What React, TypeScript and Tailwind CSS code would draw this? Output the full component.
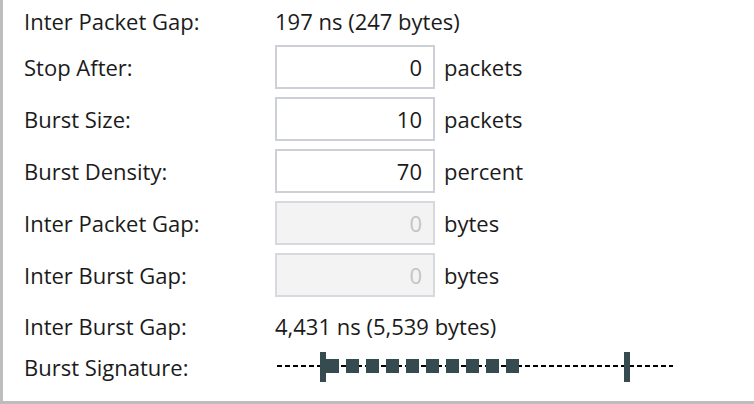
import React from 'react';

interface FieldRow {
  label: string;
  value: string;
  unit: string;
  disabled?: boolean;
}

const fields: FieldRow[] = [
  { label: 'Stop After:', value: '0', unit: 'packets' },
  { label: 'Burst Size:', value: '10', unit: 'packets' },
  { label: 'Burst Density:', value: '70', unit: 'percent' },
  { label: 'Inter Packet Gap:', value: '0', unit: 'bytes', disabled: true },
  { label: 'Inter Burst Gap:', value: '0', unit: 'bytes', disabled: true },
];

const BurstSignature: React.FC<{ count: number }> = ({ count }) => {
  const color = '#364b50';
  return (
    <svg width="400" height="32" viewBox="0 0 400 32">
      <line x1="2" y1="15" x2="398" y2="15" stroke="#000" strokeWidth="2" strokeDasharray="5 3" />
      <rect x="45" y="1" width="6" height="30" fill={color} />
      {Array.from({ length: count }).map((_, i) => (
        <rect key={i} x={51 + i * 20} y="8" width="13" height="14" fill={color} />
      ))}
      <rect x="349" y="1" width="6" height="30" fill={color} />
    </svg>
  );
};

const App: React.FC = () => {
  return (
    <div
      className="h-[404px] w-[754px] bg-white border-l-[3px] border-b-[3px] border-[#bdbdbd] pl-[21px] text-[22px] leading-[30px] text-[#1b1b1b]"
      style={{ fontFamily: '"Open Sans", "Noto Sans", sans-serif' }}
    >
      <div className="grid grid-cols-[251px_1fr] items-center h-[41px]">
        <span>Inter Packet Gap:</span>
        <span>197 ns (247 bytes)</span>
      </div>

      {fields.map((f) => (
        <div key={f.label + f.unit} className="grid grid-cols-[251px_1fr] items-center h-[52px]">
          <span>{f.label}</span>
          <div className="flex items-center">
            <div
              className={`w-[160px] h-[44px] border-2 flex items-center justify-end pr-[11px] ${
                f.disabled
                  ? 'bg-[#f3f3f3] border-[#d8d9de] text-[#c4c4c4]'
                  : 'bg-white border-[#cdd0d7] text-[#1b1b1b]'
              }`}
            >
              {f.value}
            </div>
            <span className="ml-[9px]">{f.unit}</span>
          </div>
        </div>
      ))}

      <div className="grid grid-cols-[251px_1fr] items-center h-[50px]">
        <span>Inter Burst Gap:</span>
        <span>4,431 ns (5,539 bytes)</span>
      </div>

      <div className="grid grid-cols-[251px_1fr] items-center h-[32px]">
        <span>Burst Signature:</span>
        <BurstSignature count={10} />
      </div>
    </div>
  );
};

export default App;
